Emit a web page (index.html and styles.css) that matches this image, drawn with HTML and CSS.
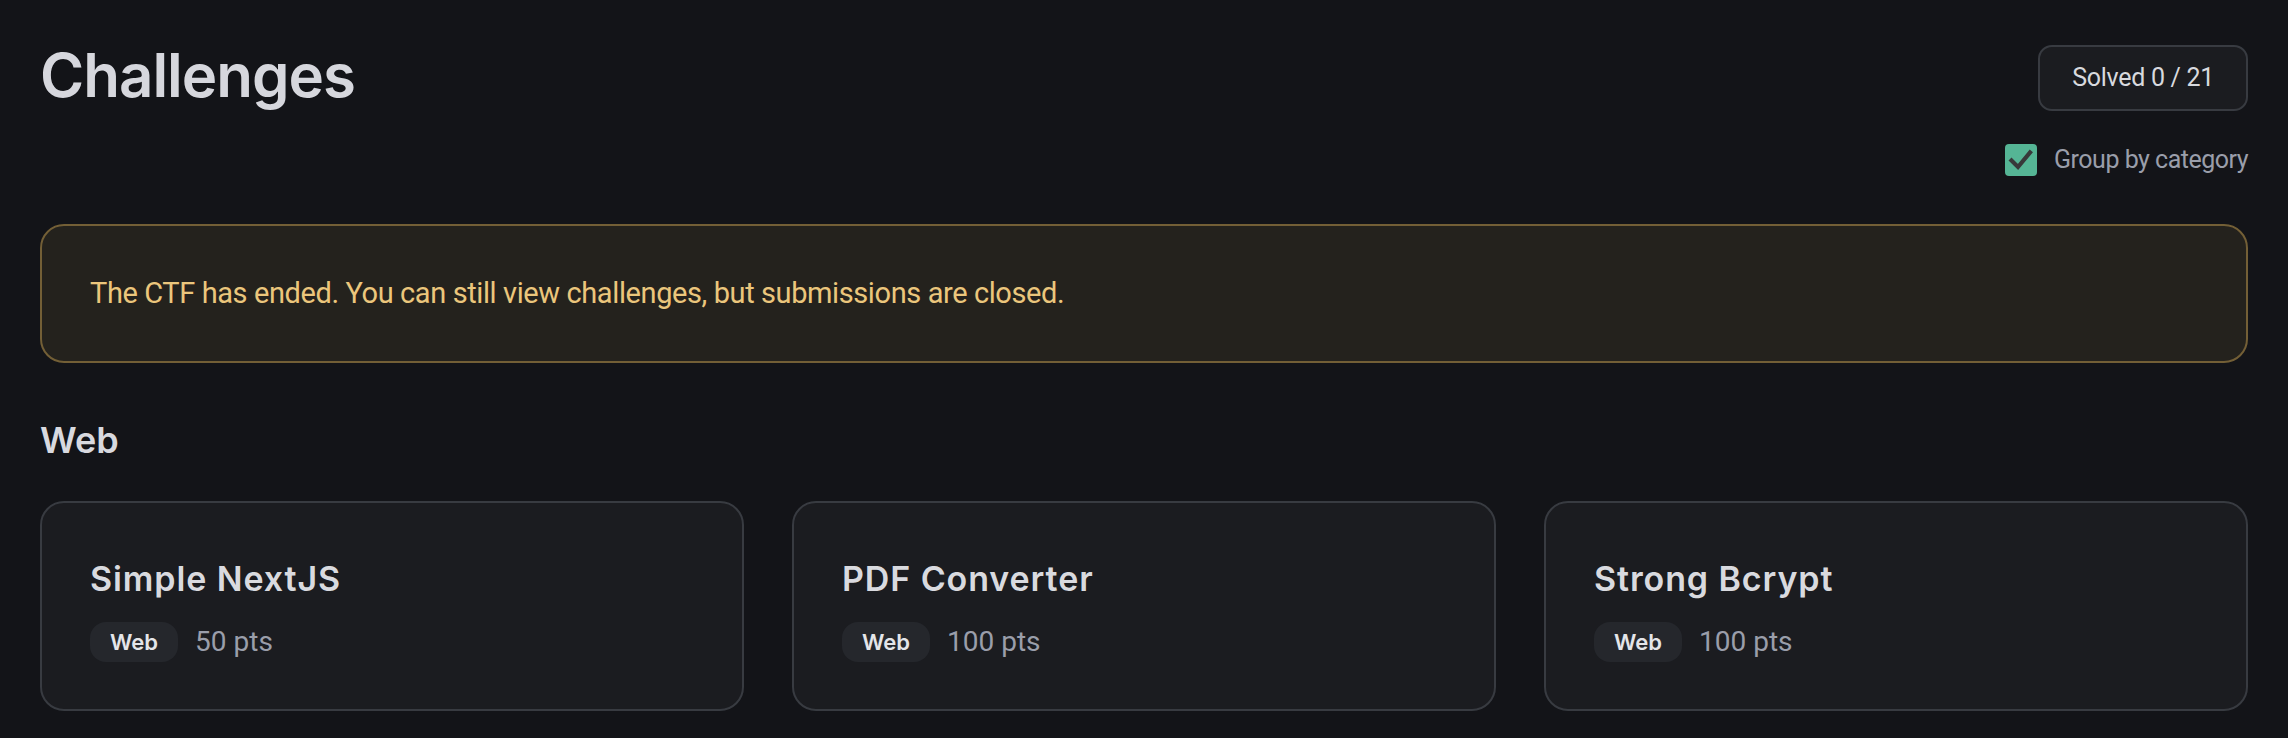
FILE: index.html
```html
<!DOCTYPE html>
<html lang="en">
<head>
<meta charset="utf-8">
<title>Challenges</title>
<link rel="stylesheet" href="styles.css">
</head>
<body>
<main class="page">
  <header class="header">
    <h1 class="title">Challenges</h1>
    <div class="header-side">
      <div class="solved">Solved 0 / 21</div>
      <label class="group-toggle">
        <span class="checkbox">
          <svg viewBox="0 0 32 32" width="32" height="32" aria-hidden="true">
            <path d="M6.5 16.5 L13 23 L25 8.5" fill="none" stroke="#38393a" stroke-width="4.2" stroke-linecap="square" stroke-linejoin="miter"/>
          </svg>
        </span>
        <span class="group-label">Group by category</span>
      </label>
    </div>
  </header>

  <div class="notice">The CTF has ended. You can still view challenges, but submissions are closed.</div>

  <section class="category">
    <h2 class="category-title">Web</h2>
    <div class="grid">
      <article class="card">
        <h3 class="card-title">Simple NextJS</h3>
        <div class="meta"><span class="badge">Web</span><span class="pts">50 pts</span></div>
      </article>
      <article class="card">
        <h3 class="card-title">PDF Converter</h3>
        <div class="meta"><span class="badge">Web</span><span class="pts">100 pts</span></div>
      </article>
      <article class="card">
        <h3 class="card-title">Strong Bcrypt</h3>
        <div class="meta"><span class="badge">Web</span><span class="pts">100 pts</span></div>
      </article>
    </div>
  </section>
</main>
</body>
</html>
```

FILE: styles.css
```css
* { box-sizing: border-box; }

html, body {
  margin: 0;
  background: #131418;
}

body {
  font-family: Roboto, "Noto Sans", sans-serif;
  color: #dcdde2;
}

.page {
  padding: 45px 40px 40px;
}

.header {
  display: flex;
  justify-content: space-between;
  align-items: flex-start;
}

.title {
  margin: 0;
  font-family: Inter, "Noto Sans", sans-serif;
  font-weight: 600;
  font-size: 60px;
  line-height: 60px;
  letter-spacing: -1px;
  color: #d6d7dd;
}

.header-side {
  display: flex;
  flex-direction: column;
  align-items: flex-end;
  gap: 33px;
}

.solved {
  border: 2px solid #383b41;
  background: #1b1c20;
  border-radius: 14px;
  padding: 16px 32px;
  font-size: 25px;
  line-height: 30px;
  letter-spacing: -0.3px;
  color: #d8d9de;
}

.group-toggle {
  display: flex;
  align-items: center;
  gap: 17px;
}

.checkbox {
  width: 32px;
  height: 32px;
  border-radius: 4px;
  background: #55b595;
  display: block;
}

.checkbox svg { display: block; }

.group-label {
  font-size: 25px;
  line-height: 32px;
  letter-spacing: -0.5px;
  color: #9a9eaa;
}

.notice {
  margin-top: 48px;
  border: 2px solid #735f36;
  background: #24221d;
  border-radius: 24px;
  padding: 45px 48px;
  font-size: 29px;
  line-height: 45px;
  letter-spacing: -0.4px;
  color: #ebc67c;
}

.category-title {
  margin: 57px 0 0;
  font-family: Inter, "Noto Sans", sans-serif;
  font-weight: 600;
  font-size: 36px;
  line-height: 40px;
  color: #d8d9df;
}

.grid {
  margin-top: 41px;
  display: grid;
  grid-template-columns: repeat(3, 1fr);
  gap: 48px;
}

.card {
  border: 2px solid #383b41;
  background: #1b1c20;
  border-radius: 24px;
  padding: 55px 48px 47px;
}

.card-title {
  margin: 0;
  font-family: Inter, "Noto Sans", sans-serif;
  font-weight: 600;
  font-size: 34px;
  line-height: 42px;
  letter-spacing: 0.9px;
  color: #d9dadf;
}

.meta {
  margin-top: 22px;
  display: flex;
  align-items: center;
  gap: 17px;
}

.badge {
  height: 40px;
  padding: 0 20px;
  border-radius: 16px;
  background: #25272c;
  font-family: Inter, "Noto Sans", sans-serif;
  font-weight: 600;
  font-size: 22px;
  line-height: 40px;
  color: #e4e5e9;
}

.pts {
  font-size: 28px;
  line-height: 40px;
  color: #9a9eaa;
}
```
